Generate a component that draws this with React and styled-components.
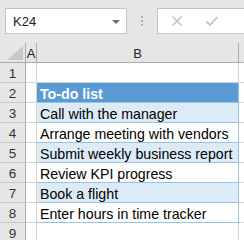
import React from "react";
import styled, { createGlobalStyle } from "styled-components";

const GlobalStyle = createGlobalStyle`
  html, body {
    margin: 0;
    padding: 0;
    background: #ffffff;
  }
  body {
    width: 244px;
    height: 240px;
    overflow: hidden;
    font-family: "Liberation Sans", Arial, sans-serif;
  }
`;

const rows = [
  { n: 1, text: "", kind: "plain" },
  { n: 2, text: "To-do list", kind: "head" },
  { n: 3, text: "Call with the manager", kind: "band" },
  { n: 4, text: "Arrange meeting with vendors", kind: "white" },
  { n: 5, text: "Submit weekly business report", kind: "band" },
  { n: 6, text: "Review KPI progress", kind: "white" },
  { n: 7, text: "Book a flight", kind: "band" },
  { n: 8, text: "Enter hours in time tracker", kind: "white" },
  { n: 9, text: "", kind: "plain" },
];

const App = () => {
  return (
    <>
      <GlobalStyle />
      <Sheet>
        <FormulaBar>
          <NameBox>
            <span>K24</span>
            <DropArrow />
          </NameBox>
          <Grip>
            <i />
            <i />
            <i />
          </Grip>
          <FormulaBox>
            <svg width="12" height="12" viewBox="0 0 12 12">
              <path d="M1.5 1.5 L10.5 10.5 M10.5 1.5 L1.5 10.5" stroke="#c4c4c4" strokeWidth="1.6" fill="none" />
            </svg>
            <svg width="14" height="12" viewBox="0 0 14 12">
              <path d="M1.5 6.5 L5 10 L12.5 2" stroke="#c4c4c4" strokeWidth="1.8" fill="none" />
            </svg>
            <Fx>f</Fx>
          </FormulaBox>
        </FormulaBar>
        <Grid>
          <Corner>
            <svg width="16" height="14" viewBox="0 0 16 14">
              <path d="M16 0 L16 14 L0 14 Z" fill="#c8c8c8" />
            </svg>
          </Corner>
          <ColHead>A</ColHead>
          <ColHead>B</ColHead>
          <ColHead $last />
          {rows.map((r) => (
            <React.Fragment key={r.n}>
              <RowHead>{r.n}</RowHead>
              <Cell />
              <TableCell $kind={r.kind}>{r.text}</TableCell>
              <Cell $last />
            </React.Fragment>
          ))}
        </Grid>
      </Sheet>
    </>
  );
};

export default App;

const Sheet = styled.div`
  width: 244px;
  height: 240px;
  display: flex;
  flex-flow: column;
  background: #e6e6e6;
`;

const FormulaBar = styled.div`
  height: 43px;
  flex: none;
  box-sizing: border-box;
  padding: 8px 0 0 5px;
  display: flex;
  align-items: flex-start;
  background: #e6e6e6;
`;

const NameBox = styled.div`
  width: 122px;
  height: 26px;
  box-sizing: border-box;
  background: #ffffff;
  border: 1px solid #c6c6c6;
  display: flex;
  align-items: center;
  justify-content: space-between;
  padding: 0 6px 0 7px;
  font-size: 13px;
  color: #222;
`;

const DropArrow = styled.span`
  width: 0;
  height: 0;
  border-left: 4px solid transparent;
  border-right: 4px solid transparent;
  border-top: 4px solid #6e6e6e;
  margin-top: 1px;
`;

const Grip = styled.div`
  width: 30px;
  height: 26px;
  display: flex;
  flex-flow: column;
  align-items: center;
  justify-content: center;
  gap: 2px;
  i {
    width: 2px;
    height: 2px;
    background: #b0b0b0;
  }
`;

const FormulaBox = styled.div`
  flex: 1;
  height: 26px;
  box-sizing: border-box;
  background: #ffffff;
  border: 1px solid #c6c6c6;
  border-right: none;
  display: flex;
  align-items: center;
  gap: 22px;
  padding-left: 13px;
  overflow: hidden;
  svg {
    flex: none;
  }
`;

const Fx = styled.span`
  font-family: "Liberation Serif", serif;
  font-style: italic;
  font-size: 13px;
  color: #444;
  margin-left: 4px;
  padding-top: 6px;
`;

const Grid = styled.div`
  display: grid;
  grid-template-columns: 26px 11px 202px 5px;
  grid-template-rows: 20px repeat(9, 20px);
  background: #ffffff;
`;

const Corner = styled.div`
  background: #e6e6e6;
  border-right: 1px solid #ababab;
  border-bottom: 1px solid #ababab;
  box-sizing: border-box;
  display: flex;
  align-items: flex-end;
  justify-content: flex-end;
  padding: 0 2px 2px 0;
`;

const ColHead = styled.div`
  background: #e6e6e6;
  box-sizing: border-box;
  border-right: 1px solid ${(p) => (p.$last ? "transparent" : "#ababab")};
  border-bottom: 1px solid #ababab;
  font-size: 13px;
  color: #222;
  display: flex;
  align-items: center;
  justify-content: center;
  padding-top: 2px;
`;

const RowHead = styled.div`
  background: #e6e6e6;
  box-sizing: border-box;
  border-right: 1px solid #ababab;
  border-bottom: 1px solid #c8c8c8;
  font-size: 13.5px;
  color: #333;
  display: flex;
  align-items: center;
  justify-content: center;
  padding-top: 1px;
`;

const Cell = styled.div`
  box-sizing: border-box;
  background: #ffffff;
  border-right: 1px solid ${(p) => (p.$last ? "transparent" : "#d4d4d4")};
  border-bottom: 1px solid #d4d4d4;
`;

const cellBg = { plain: "#ffffff", head: "#5b9bd5", band: "#ddebf7", white: "#ffffff" };

const TableCell = styled.div`
  box-sizing: border-box;
  background: ${(p) => cellBg[p.$kind]};
  color: ${(p) => (p.$kind === "head" ? "#ffffff" : "#000000")};
  font-weight: ${(p) => (p.$kind === "head" ? 700 : 400)};
  border-right: 1px solid ${(p) => (p.$kind === "plain" ? "#d4d4d4" : "#9bc2e6")};
  border-bottom: 1px solid ${(p) => (p.$kind === "plain" ? "#d4d4d4" : "#9bc2e6")};
  font-size: 14.2px;
  white-space: nowrap;
  overflow: hidden;
  display: flex;
  align-items: center;
  padding: 2px 0 0 3px;
`;
